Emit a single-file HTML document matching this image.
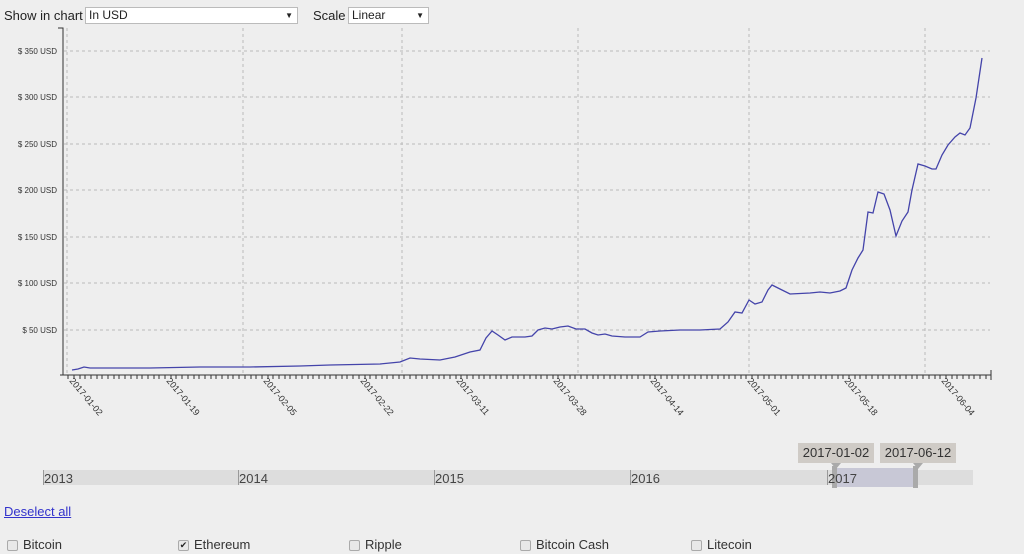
<!DOCTYPE html>
<html><head><meta charset="utf-8"><style>
body{margin:0;background:#eee;font-family:"Liberation Sans",Arial,sans-serif;width:1024px;height:554px;overflow:hidden;position:relative;color:#222}
.a{position:absolute}
.sel{position:absolute;background:#fff;border:1px solid #bbb;font-size:12px;height:15px;line-height:15px;padding-left:3px;box-sizing:content-box}
.sel:after{content:"▼";position:absolute;right:4px;top:0;font-size:8px}
.cb{position:absolute;width:9px;height:9px;border:1px solid #aaa;background:#e8e8e8;border-radius:2px}
.lb{position:absolute;font-size:13px;color:#333}
.tt:after{content:"";position:absolute;left:33px;bottom:-6px;border-left:5px solid transparent;border-right:5px solid transparent;border-top:6px solid #aaa}
</style></head><body>
<div class="a" style="left:4px;top:8px;font-size:13px">Show in chart</div>
<div class="sel" style="left:85px;top:7px;width:208px">In USD</div>
<div class="a" style="left:313px;top:8px;font-size:13px">Scale</div>
<div class="sel" style="left:348px;top:7px;width:76px">Linear</div>
<svg class="a" style="left:0;top:0" width="1024" height="430">
<g stroke="#bbb" stroke-dasharray="3,3" stroke-width="1">
<line x1="64" y1="51" x2="990" y2="51"/><line x1="64" y1="97" x2="990" y2="97"/><line x1="64" y1="144" x2="990" y2="144"/><line x1="64" y1="190" x2="990" y2="190"/><line x1="64" y1="237" x2="990" y2="237"/><line x1="64" y1="283" x2="990" y2="283"/><line x1="64" y1="330" x2="990" y2="330"/>
<line x1="67" y1="28" x2="67" y2="374"/><line x1="243" y1="28" x2="243" y2="374"/><line x1="402" y1="28" x2="402" y2="374"/><line x1="578" y1="28" x2="578" y2="374"/><line x1="749" y1="28" x2="749" y2="374"/><line x1="925" y1="28" x2="925" y2="374"/>
</g>
<g stroke="#333" fill="none"><path d="M58 28H63V375"/><line x1="60" y1="375" x2="991" y2="375"/><line x1="991" y1="370" x2="991" y2="380"/></g>
<g font-size="8" fill="#333" text-anchor="end">
<text x="57" y="54">$ 350 USD</text><text x="57" y="100">$ 300 USD</text><text x="57" y="147">$ 250 USD</text><text x="57" y="193">$ 200 USD</text><text x="57" y="240">$ 150 USD</text><text x="57" y="286">$ 100 USD</text><text x="57" y="333">$ 50 USD</text>
</g>
<g stroke="#333" stroke-width="1">
<path d="M68 375v4M74 375v4M80 375v4M85 375v4M91 375v4M97 375v4M102 375v4M108 375v4M114 375v4M119 375v4M125 375v4M131 375v4M137 375v4M142 375v4M148 375v4M154 375v4M159 375v4M165 375v4M171 375v4M176 375v4M182 375v4M188 375v4M194 375v4M199 375v4M205 375v4M211 375v4M216 375v4M222 375v4M228 375v4M233 375v4M239 375v4M245 375v4M251 375v4M256 375v4M262 375v4M268 375v4M273 375v4M279 375v4M285 375v4M290 375v4M296 375v4M302 375v4M308 375v4M313 375v4M319 375v4M325 375v4M330 375v4M336 375v4M342 375v4M347 375v4M353 375v4M359 375v4M365 375v4M370 375v4M376 375v4M382 375v4M387 375v4M393 375v4M399 375v4M404 375v4M410 375v4M416 375v4M422 375v4M427 375v4M433 375v4M439 375v4M444 375v4M450 375v4M456 375v4M461 375v4M467 375v4M473 375v4M479 375v4M484 375v4M490 375v4M496 375v4M501 375v4M507 375v4M513 375v4M518 375v4M524 375v4M530 375v4M536 375v4M541 375v4M547 375v4M553 375v4M558 375v4M564 375v4M570 375v4M575 375v4M581 375v4M587 375v4M593 375v4M598 375v4M604 375v4M610 375v4M615 375v4M621 375v4M627 375v4M632 375v4M638 375v4M644 375v4M650 375v4M655 375v4M661 375v4M667 375v4M672 375v4M678 375v4M684 375v4M689 375v4M695 375v4M701 375v4M707 375v4M712 375v4M718 375v4M724 375v4M729 375v4M735 375v4M741 375v4M746 375v4M752 375v4M758 375v4M764 375v4M769 375v4M775 375v4M781 375v4M786 375v4M792 375v4M798 375v4M803 375v4M809 375v4M815 375v4M821 375v4M826 375v4M832 375v4M838 375v4M843 375v4M849 375v4M855 375v4M860 375v4M866 375v4M872 375v4M878 375v4M883 375v4M889 375v4M895 375v4M900 375v4M906 375v4M912 375v4M917 375v4M923 375v4M929 375v4M935 375v4M940 375v4M946 375v4M952 375v4M957 375v4M963 375v4M969 375v4M974 375v4M980 375v4M986 375v4"/>
</g>
<polyline fill="none" stroke="#4444aa" stroke-width="1.3" points="72,370 78,369 84,367 90,368 100,368 120,368 150,368 200,367 250,367 300,366 330,365 380,364 400,362 410,358 420,359 440,360 455,357 470,352 480,350 486,338 492,331 498,335 505,340 512,337 525,337 532,336 538,330 545,328 552,329 560,327 568,326 576,329 585,329 592,333 598,335 605,334 612,336 625,337 640,337 648,332 660,331 680,330 700,330 720,329 728,322 735,312 742,313 749,300 755,304 762,302 768,290 772,285 780,289 790,294 810,293 820,292 830,293 840,291 846,288 852,270 858,258 863,250 868,212 873,213 878,192 884,194 890,210 896,236 902,221 908,212 912,190 918,164 925,166 932,169 936,169 942,155 948,145 955,137 960,133 965,135 970,128 976,98 982,58"/>
<g font-size="9" fill="#333">
<text transform="translate(69,381) rotate(50)">2017-01-02</text><text transform="translate(166,381) rotate(50)">2017-01-19</text><text transform="translate(263,381) rotate(50)">2017-02-05</text><text transform="translate(360,381) rotate(50)">2017-02-22</text><text transform="translate(456,381) rotate(50)">2017-03-11</text><text transform="translate(553,381) rotate(50)">2017-03-28</text><text transform="translate(650,381) rotate(50)">2017-04-14</text><text transform="translate(747,381) rotate(50)">2017-05-01</text><text transform="translate(844,381) rotate(50)">2017-05-18</text><text transform="translate(941,381) rotate(50)">2017-06-04</text>
</g>
<rect x="467" y="432" width="8" height="8" fill="#00008b"/>
<text x="480" y="440" font-size="10" fill="#333">Ethereum</text>
</svg>
<div class="a" style="left:43px;top:470px;width:930px;height:15px;background:#ddd"></div>
<div class="a" style="left:833px;top:468px;width:84px;height:19px;background:#c8c8d6"></div>
<div class="a" style="left:832px;top:466px;width:5px;height:22px;background:#aaa"></div>
<div class="a" style="left:913px;top:466px;width:5px;height:22px;background:#aaa"></div>
<div class="a" style="left:43px;top:470px;font-size:13px;color:#444;border-left:1px solid #999;height:15px;line-height:17px">2013</div>
<div class="a" style="left:238px;top:470px;font-size:13px;color:#444;border-left:1px solid #999;height:15px;line-height:17px">2014</div>
<div class="a" style="left:434px;top:470px;font-size:13px;color:#444;border-left:1px solid #999;height:15px;line-height:17px">2015</div>
<div class="a" style="left:630px;top:470px;font-size:13px;color:#444;border-left:1px solid #999;height:15px;line-height:17px">2016</div>
<div class="a" style="left:827px;top:470px;font-size:13px;color:#444;border-left:1px solid #999;height:15px;line-height:17px">2017</div>
<div class="a tt" style="left:798px;top:443px;width:76px;height:20px;background:#cfcbc6;font-size:13px;line-height:20px;text-align:center;color:#333">2017-01-02</div>
<div class="a tt" style="left:880px;top:443px;width:76px;height:20px;background:#cfcbc6;font-size:13px;line-height:20px;text-align:center;color:#333">2017-06-12</div>
<div class="a" style="left:4px;top:504px;font-size:13px;color:#33c;text-decoration:underline">Deselect all</div>
<div class="cb" style="left:7px;top:540px"></div><div class="lb" style="left:23px;top:537px">Bitcoin</div>
<div class="cb" style="left:178px;top:540px;font-size:9px;line-height:9px;text-align:center">✔</div><div class="lb" style="left:194px;top:537px">Ethereum</div>
<div class="cb" style="left:349px;top:540px"></div><div class="lb" style="left:365px;top:537px">Ripple</div>
<div class="cb" style="left:520px;top:540px"></div><div class="lb" style="left:536px;top:537px">Bitcoin Cash</div>
<div class="cb" style="left:691px;top:540px"></div><div class="lb" style="left:707px;top:537px">Litecoin</div>
</body></html>
